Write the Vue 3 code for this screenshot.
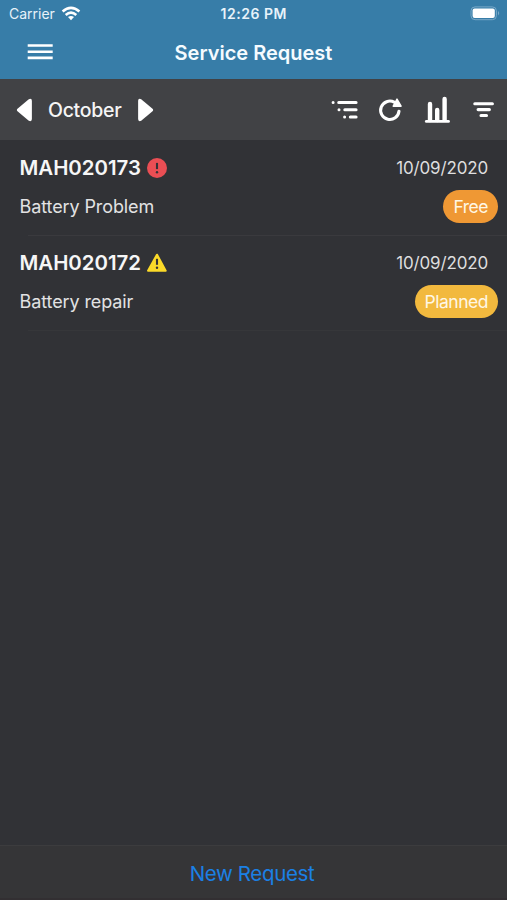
<script setup>
const requests = [
  { id: 'MAH020173', title: 'Battery Problem', date: '10/09/2020', status: 'Free', level: 'critical' },
  { id: 'MAH020172', title: 'Battery repair', date: '10/09/2020', status: 'Planned', level: 'warning' },
]
</script>

<template>
  <div class="screen">
    <header class="top">
      <div class="status">
        <div class="carrier">
          <span class="carrier-name">Carrier</span>
          <svg width="20" height="16" viewBox="0 0 20 16" fill="none" stroke="#fff" stroke-width="2.6">
            <path d="M1.6 5.5Q10-1.7 18.4 5.5" />
            <path d="M4.7 8.9Q10 4.3 15.3 8.9" />
            <path d="M7 11.1Q10 8.7 13 11.1L10 14.3Z" fill="#fff" stroke="none" />
          </svg>
        </div>
        <span class="clock">12:26 PM</span>
        <svg class="battery" width="31" height="15" viewBox="0 0 31 15">
          <rect x="1" y=".9" width="25.4" height="12.8" rx="4" fill="none" stroke="#79a9c8" stroke-width="1" />
          <rect x="2.6" y="2.6" width="22.2" height="9.4" rx="2" fill="#fff" />
          <path d="M28 5Q30.4 7.2 28 9.4Z" fill="#79a9c8" />
        </svg>
      </div>
      <div class="nav">
        <svg class="menu" width="26" height="18" viewBox="0 0 26 18" fill="#fff">
          <path d="M.7 1.2h25v2.6H.7zM.7 7.4h25v2.6H.7zM.7 13.6h25v2.6H.7z" />
        </svg>
        <h1>Service Request</h1>
      </div>
    </header>

    <div class="toolbar">
      <svg width="17" height="24" viewBox="0 0 17 24" fill="#fff"><path d="M1.2 11Q.4 12 1.2 13L12.8 22.8Q15.9 24 15.9 21V3Q15.9 0 12.8 1.2Z" /></svg>
      <span class="month">October</span>
      <svg width="17" height="24" viewBox="0 0 17 24" fill="#fff"><path d="M15.8 11Q16.6 12 15.8 13L4.2 22.8Q1.1 24 1.1 21V3Q1.1 0 4.2 1.2Z" /></svg>
      <svg class="tools" width="167" height="30" viewBox="328 95 167 30" fill="none" stroke="#fff" stroke-linecap="round">
        <g stroke-width="3">
          <path d="M338.7 102.5h17.4M344.8 109.7h11.3M350.3 117h5.8" />
          <path d="M333.1 102.5h.01M339 109.7h.01M344.6 117h.01" />
        </g>
        <path d="M394.2 102.2A9.2 9.2 0 1 0 399 111.2" stroke-width="3.1" />
        <path d="M397 99.1L401.1 106.2H393.2Z" fill="#fff" stroke-width="1.4" stroke-linejoin="round" />
        <path d="M426.3 121.4h22.2" stroke-width="2.8" />
        <path d="M430 104v16M437.2 110v10M444.6 98.9v21" stroke-width="4.4" />
        <path d="M474.8 103.7h17.6M478.1 109.6h11.3M481 115.5h5.5" stroke-width="3.1" />
      </svg>
    </div>

    <main>
      <article v-for="item in requests" :key="item.id" class="row">
        <div class="line">
          <strong>{{ item.id }}</strong>
          <svg v-if="item.level === 'critical'" width="22" height="22" viewBox="0 0 22 22">
            <circle cx="11" cy="11" r="10" fill="#ea4e54" />
            <path d="M11 5.9v6.2" stroke="#353237" stroke-width="2.1" /><circle cx="11" cy="15.3" r="1.2" fill="#353237" />
          </svg>
          <svg v-else width="22" height="22" viewBox="0 0 22 22">
            <path d="M11 2.8L19.6 18.7H2.1Z" fill="#fbda29" stroke="#fbda29" stroke-width="2.2" stroke-linejoin="round" />
            <path d="M11 6.8v6" stroke="#353237" stroke-width="2.1" /><circle cx="11" cy="15.8" r="1.2" fill="#353237" />
          </svg>
          <time>{{ item.date }}</time>
        </div>
        <div class="detail">
          <span class="title">{{ item.title }}</span>
          <span class="badge" :class="item.status.toLowerCase()">{{ item.status }}</span>
        </div>
      </article>
    </main>

    <footer><button>New Request</button></footer>
  </div>
</template>

<style>
body { margin: 0; background: #313236; }
</style>

<style scoped>
.screen { width: 507px; height: 900px; box-sizing: border-box; display: flex; flex-direction: column; overflow: hidden; background: #313236; color: #fff; font-family: Inter, "Liberation Sans", sans-serif; white-space: nowrap; }
svg { display: block; flex: none; }
.top { height: 79px; flex: none; background: #377da8; }
.status { height: 27px; display: grid; grid-template-columns: 1fr auto 1fr; align-items: center; padding: 0 6px 0 9px; }
.carrier { display: flex; align-items: center; gap: 6px; color: #e7f2f9; font-size: 14px; }
.clock { font-size: 14px; font-weight: 600; color: #e7f3fa; letter-spacing: .5px; margin-right: 2.5px; }
.battery { justify-self: end; }
.nav { height: 50px; display: grid; grid-template-columns: 1fr auto 1fr; align-items: center; padding: 0 27px; }
h1 { margin: 0; padding-top: 1px; font-size: 20px; line-height: 24px; font-weight: 600; grid-column: 2; color: #f5fbff; }
.toolbar { height: 61px; flex: none; box-sizing: border-box; display: flex; align-items: center; padding: 0 12px 0 16px; background: #414245; }
.month { font-size: 19.5px; line-height: 24px; font-weight: 500; letter-spacing: -.3px; margin: 0 15.5px 0 15px; color: #f5f5f5; }
.tools { margin-left: auto; }
main { flex: 1; }
.row { height: 95.5px; box-sizing: border-box; padding: 16px 9px 0 19.5px; background: linear-gradient(#3a3a3e, #3a3a3e) 28px 100% / 100% 1px no-repeat; }
.row + .row { padding-top: 15.5px; background-image: linear-gradient(#36373a, #36373a); }
.line { display: flex; height: 24px; align-items: center; padding-right: 10px; }
.line strong { font-size: 20.4px; line-height: 24px; font-weight: 600; margin-right: 5px; color: #f6f6f6; }
.line time { margin-left: auto; font-size: 17px; line-height: 24px; letter-spacing: -.16px; color: #dededf; }
.detail { height: 33px; margin-top: 10px; display: flex; align-items: center; justify-content: space-between; }
.title { font-size: 18px; letter-spacing: -.1px; color: #e2e2e3; }
.badge { height: 33px; line-height: 33px; padding: 0 10px; border-radius: 17px; font-size: 17.5px; letter-spacing: -.48px; color: #fff7e5; }
.free { background: #ef9834; }
.planned { background: #f2b93e; }
footer { height: 55px; flex: none; box-sizing: border-box; border-top: 1px solid #3c3c3e; border-bottom: 2px solid #322f32; background: #353537; display: flex; align-items: center; justify-content: center; }
button { border: 0; padding: 2px 3px 0 0; background: none; color: #1b80e5; font: 400 20.5px Inter, "Liberation Sans", sans-serif; letter-spacing: -.35px; }
</style>
